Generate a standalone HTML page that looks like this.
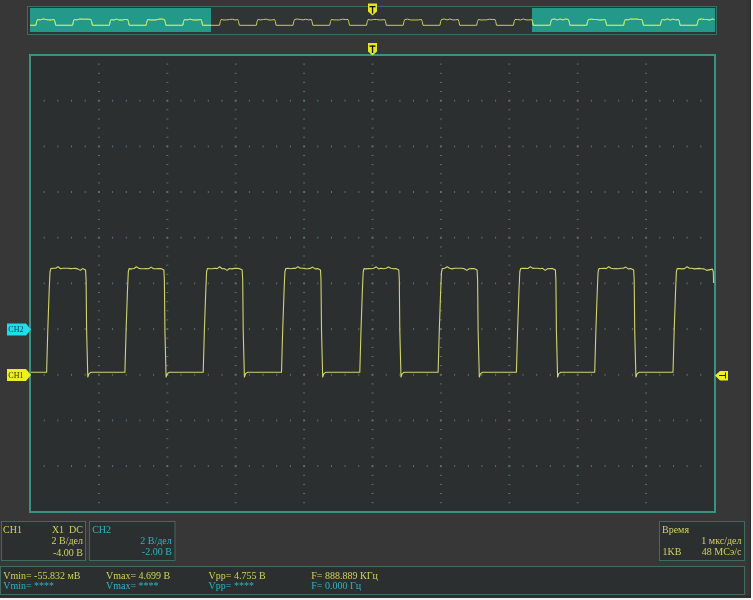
<!DOCTYPE html>
<html><head><meta charset="utf-8">
<style>
html,body{margin:0;padding:0;}
body{width:753px;height:600px;overflow:hidden;background:#373737;position:relative;}
svg{position:absolute;left:0;top:0;}
text{font-family:"Liberation Serif",serif;font-size:10px;}
</style></head><body>
<svg style="will-change:transform" width="753" height="600" viewBox="0 0 753 600">
<rect x="0" y="0" width="753" height="600" fill="#373737"/>
<!-- right/bottom white edge -->
<rect x="747" y="0" width="3" height="597" fill="#353535"/><rect x="750" y="0" width="1" height="600" fill="#2c2c2c"/>
<rect x="751" y="0" width="2" height="600" fill="#f2f2f2"/>
<rect x="0" y="595" width="750" height="3" fill="#2e2e2e"/>
<rect x="0" y="598" width="753" height="2" fill="#f2f2f2"/>

<!-- overview bar -->
<rect x="27.5" y="6.5" width="689" height="28" fill="#2f3434" stroke="#3f6b66" stroke-width="1"/>
<rect x="30" y="8" width="181" height="24" fill="#239a89"/>
<rect x="532" y="8" width="183" height="24" fill="#239a89"/>
<path d="M30 25.3 L35.9 25.3 L36.7 21.5 L37.5 19.5 L40.3 19.9 L43.1 19 L45.9 19.5 L48.6 19.9 L51.4 19.9 L54.2 19.5 L54.9 21.5 L55.7 25.3 L72.6 25.3 L73.4 21.5 L74.2 19.5 L77 19.9 L79.8 19 L82.6 19.2 L85.4 19.2 L88.1 19.2 L90.9 19.5 L91.6 21.5 L92.4 25.3 L109.4 25.3 L110.2 21.5 L111 19.5 L113.7 20 L116.5 19.2 L119.3 20 L122.1 20 L124.9 19.5 L127.7 19.5 L128.4 21.5 L129.2 25.3 L146.1 25.3 L146.9 21.5 L147.7 19.5 L150.5 20 L153.3 20 L156 19.9 L158.8 19.2 L161.6 19 L164.4 19.5 L165.1 21.5 L165.9 25.3 L182.8 25.3 L183.6 21.5 L184.4 19.5 L187.2 19.9 L190 19.2 L192.8 19.9 L195.6 20 L198.3 19.9 L201.1 19.5 L201.8 21.5 L202.6 25.3 L219.5 25.3 L220.3 21.5 L221.1 19.5 L223.9 20 L226.7 19.9 L229.5 19.5 L232.3 19.2 L235.1 20 L237.8 19.5 L238.5 21.5 L239.3 25.3 L256.3 25.3 L257.1 21.5 L257.9 19.5 L260.7 19.9 L263.4 19.5 L266.2 19.2 L269 20 L271.8 20 L274.6 19.5 L275.3 21.5 L276.1 25.3 L293 25.3 L293.8 21.5 L294.6 19.5 L297.4 19 L300.2 19.5 L303 19.9 L305.7 19.2 L308.5 19.9 L311.3 19.5 L312 21.5 L312.8 25.3 L329.7 25.3 L330.5 21.5 L331.3 19.5 L334.1 19.9 L336.9 20 L339.7 19.9 L342.5 19.2 L345.3 19.5 L348 19.5 L348.7 21.5 L349.5 25.3 L366.5 25.3 L367.3 21.5 L368.1 19.5 L370.9 20 L373.6 19.5 L376.4 19.5 L379.2 19.9 L382 19.9 L384.8 19.5 L385.5 21.5 L386.3 25.3 L403.2 25.3 L404 21.5 L404.8 19.5 L407.6 19.2 L410.4 19.9 L413.1 20 L415.9 20 L418.7 19.9 L421.5 19.5 L422.2 21.5 L423 25.3 L439.9 25.3 L440.7 21.5 L441.5 19.5 L444.3 19 L447.1 19.9 L449.9 19 L452.7 19.9 L455.4 19.9 L458.2 19.5 L458.9 21.5 L459.7 25.3 L476.7 25.3 L477.5 21.5 L478.3 19.5 L481 20 L483.8 19.9 L486.6 19.9 L489.4 19.2 L492.2 19.5 L495 19.5 L495.7 21.5 L496.5 25.3 L513.4 25.3 L514.2 21.5 L515 19.5 L517.8 19.5 L520.6 20 L523.3 19 L526.1 19.9 L528.9 20 L531.7 19.5 L532.4 21.5 L533.2 25.3 L550.1 25.3 L550.9 21.5 L551.7 19.5 L554.5 19 L557.3 19.9 L560.1 19 L562.9 19.9 L565.6 19 L568.4 19.5 L569.1 21.5 L569.9 25.3 L586.8 25.3 L587.6 21.5 L588.4 19.5 L591.2 19.2 L594 19.5 L596.8 19.5 L599.6 20 L602.4 19.9 L605.1 19.5 L605.8 21.5 L606.6 25.3 L623.6 25.3 L624.4 21.5 L625.2 19.5 L628 19.9 L630.7 19 L633.5 19.2 L636.3 19 L639.1 19.5 L641.9 19.5 L642.6 21.5 L643.4 25.3 L660.3 25.3 L661.1 21.5 L661.9 19.5 L664.7 19.9 L667.5 19 L670.3 20 L673 19.2 L675.8 19.9 L678.6 19.5 L679.3 21.5 L680.1 25.3 L697 25.3 L697.8 21.5 L698.6 19.5 L701.4 19 L704.2 19.5 L707 19.5 L709.8 20 L712.6 19 L714.5 19.5" fill="none" stroke="#cccc55" stroke-width="1" stroke-linejoin="round"/>
<clipPath id="c1"><rect x="30" y="8" width="181" height="24"/><rect x="532" y="8" width="183" height="24"/></clipPath>
<path d="M30 25.3 L35.9 25.3 L36.7 21.5 L37.5 19.5 L40.3 19.9 L43.1 19 L45.9 19.5 L48.6 19.9 L51.4 19.9 L54.2 19.5 L54.9 21.5 L55.7 25.3 L72.6 25.3 L73.4 21.5 L74.2 19.5 L77 19.9 L79.8 19 L82.6 19.2 L85.4 19.2 L88.1 19.2 L90.9 19.5 L91.6 21.5 L92.4 25.3 L109.4 25.3 L110.2 21.5 L111 19.5 L113.7 20 L116.5 19.2 L119.3 20 L122.1 20 L124.9 19.5 L127.7 19.5 L128.4 21.5 L129.2 25.3 L146.1 25.3 L146.9 21.5 L147.7 19.5 L150.5 20 L153.3 20 L156 19.9 L158.8 19.2 L161.6 19 L164.4 19.5 L165.1 21.5 L165.9 25.3 L182.8 25.3 L183.6 21.5 L184.4 19.5 L187.2 19.9 L190 19.2 L192.8 19.9 L195.6 20 L198.3 19.9 L201.1 19.5 L201.8 21.5 L202.6 25.3 L219.5 25.3 L220.3 21.5 L221.1 19.5 L223.9 20 L226.7 19.9 L229.5 19.5 L232.3 19.2 L235.1 20 L237.8 19.5 L238.5 21.5 L239.3 25.3 L256.3 25.3 L257.1 21.5 L257.9 19.5 L260.7 19.9 L263.4 19.5 L266.2 19.2 L269 20 L271.8 20 L274.6 19.5 L275.3 21.5 L276.1 25.3 L293 25.3 L293.8 21.5 L294.6 19.5 L297.4 19 L300.2 19.5 L303 19.9 L305.7 19.2 L308.5 19.9 L311.3 19.5 L312 21.5 L312.8 25.3 L329.7 25.3 L330.5 21.5 L331.3 19.5 L334.1 19.9 L336.9 20 L339.7 19.9 L342.5 19.2 L345.3 19.5 L348 19.5 L348.7 21.5 L349.5 25.3 L366.5 25.3 L367.3 21.5 L368.1 19.5 L370.9 20 L373.6 19.5 L376.4 19.5 L379.2 19.9 L382 19.9 L384.8 19.5 L385.5 21.5 L386.3 25.3 L403.2 25.3 L404 21.5 L404.8 19.5 L407.6 19.2 L410.4 19.9 L413.1 20 L415.9 20 L418.7 19.9 L421.5 19.5 L422.2 21.5 L423 25.3 L439.9 25.3 L440.7 21.5 L441.5 19.5 L444.3 19 L447.1 19.9 L449.9 19 L452.7 19.9 L455.4 19.9 L458.2 19.5 L458.9 21.5 L459.7 25.3 L476.7 25.3 L477.5 21.5 L478.3 19.5 L481 20 L483.8 19.9 L486.6 19.9 L489.4 19.2 L492.2 19.5 L495 19.5 L495.7 21.5 L496.5 25.3 L513.4 25.3 L514.2 21.5 L515 19.5 L517.8 19.5 L520.6 20 L523.3 19 L526.1 19.9 L528.9 20 L531.7 19.5 L532.4 21.5 L533.2 25.3 L550.1 25.3 L550.9 21.5 L551.7 19.5 L554.5 19 L557.3 19.9 L560.1 19 L562.9 19.9 L565.6 19 L568.4 19.5 L569.1 21.5 L569.9 25.3 L586.8 25.3 L587.6 21.5 L588.4 19.5 L591.2 19.2 L594 19.5 L596.8 19.5 L599.6 20 L602.4 19.9 L605.1 19.5 L605.8 21.5 L606.6 25.3 L623.6 25.3 L624.4 21.5 L625.2 19.5 L628 19.9 L630.7 19 L633.5 19.2 L636.3 19 L639.1 19.5 L641.9 19.5 L642.6 21.5 L643.4 25.3 L660.3 25.3 L661.1 21.5 L661.9 19.5 L664.7 19.9 L667.5 19 L670.3 20 L673 19.2 L675.8 19.9 L678.6 19.5 L679.3 21.5 L680.1 25.3 L697 25.3 L697.8 21.5 L698.6 19.5 L701.4 19 L704.2 19.5 L707 19.5 L709.8 20 L712.6 19 L714.5 19.5" fill="none" stroke="#a8f078" stroke-width="1" stroke-linejoin="round" clip-path="url(#c1)"/>

<!-- main graticule -->
<rect x="30" y="55" width="685" height="457" fill="#2b2f2f" stroke="#3a9282" stroke-width="2"/>
<g fill="#567270"><rect x="43.7" y="99.7" width="1" height="2"/><rect x="57.4" y="99.7" width="1" height="2"/><rect x="71" y="99.7" width="1" height="2"/><rect x="84.7" y="99.7" width="1" height="2"/><rect x="112.1" y="99.7" width="1" height="2"/><rect x="125.8" y="99.7" width="1" height="2"/><rect x="139.4" y="99.7" width="1" height="2"/><rect x="153.1" y="99.7" width="1" height="2"/><rect x="180.5" y="99.7" width="1" height="2"/><rect x="194.2" y="99.7" width="1" height="2"/><rect x="207.8" y="99.7" width="1" height="2"/><rect x="221.5" y="99.7" width="1" height="2"/><rect x="248.9" y="99.7" width="1" height="2"/><rect x="262.6" y="99.7" width="1" height="2"/><rect x="276.2" y="99.7" width="1" height="2"/><rect x="289.9" y="99.7" width="1" height="2"/><rect x="317.3" y="99.7" width="1" height="2"/><rect x="331" y="99.7" width="1" height="2"/><rect x="344.6" y="99.7" width="1" height="2"/><rect x="358.3" y="99.7" width="1" height="2"/><rect x="385.7" y="99.7" width="1" height="2"/><rect x="399.4" y="99.7" width="1" height="2"/><rect x="413" y="99.7" width="1" height="2"/><rect x="426.7" y="99.7" width="1" height="2"/><rect x="454.1" y="99.7" width="1" height="2"/><rect x="467.8" y="99.7" width="1" height="2"/><rect x="481.4" y="99.7" width="1" height="2"/><rect x="495.1" y="99.7" width="1" height="2"/><rect x="522.5" y="99.7" width="1" height="2"/><rect x="536.2" y="99.7" width="1" height="2"/><rect x="549.8" y="99.7" width="1" height="2"/><rect x="563.5" y="99.7" width="1" height="2"/><rect x="590.9" y="99.7" width="1" height="2"/><rect x="604.6" y="99.7" width="1" height="2"/><rect x="618.2" y="99.7" width="1" height="2"/><rect x="631.9" y="99.7" width="1" height="2"/><rect x="659.3" y="99.7" width="1" height="2"/><rect x="673" y="99.7" width="1" height="2"/><rect x="686.6" y="99.7" width="1" height="2"/><rect x="700.3" y="99.7" width="1" height="2"/><rect x="43.7" y="145.4" width="1" height="2"/><rect x="57.4" y="145.4" width="1" height="2"/><rect x="71" y="145.4" width="1" height="2"/><rect x="84.7" y="145.4" width="1" height="2"/><rect x="112.1" y="145.4" width="1" height="2"/><rect x="125.8" y="145.4" width="1" height="2"/><rect x="139.4" y="145.4" width="1" height="2"/><rect x="153.1" y="145.4" width="1" height="2"/><rect x="180.5" y="145.4" width="1" height="2"/><rect x="194.2" y="145.4" width="1" height="2"/><rect x="207.8" y="145.4" width="1" height="2"/><rect x="221.5" y="145.4" width="1" height="2"/><rect x="248.9" y="145.4" width="1" height="2"/><rect x="262.6" y="145.4" width="1" height="2"/><rect x="276.2" y="145.4" width="1" height="2"/><rect x="289.9" y="145.4" width="1" height="2"/><rect x="317.3" y="145.4" width="1" height="2"/><rect x="331" y="145.4" width="1" height="2"/><rect x="344.6" y="145.4" width="1" height="2"/><rect x="358.3" y="145.4" width="1" height="2"/><rect x="385.7" y="145.4" width="1" height="2"/><rect x="399.4" y="145.4" width="1" height="2"/><rect x="413" y="145.4" width="1" height="2"/><rect x="426.7" y="145.4" width="1" height="2"/><rect x="454.1" y="145.4" width="1" height="2"/><rect x="467.8" y="145.4" width="1" height="2"/><rect x="481.4" y="145.4" width="1" height="2"/><rect x="495.1" y="145.4" width="1" height="2"/><rect x="522.5" y="145.4" width="1" height="2"/><rect x="536.2" y="145.4" width="1" height="2"/><rect x="549.8" y="145.4" width="1" height="2"/><rect x="563.5" y="145.4" width="1" height="2"/><rect x="590.9" y="145.4" width="1" height="2"/><rect x="604.6" y="145.4" width="1" height="2"/><rect x="618.2" y="145.4" width="1" height="2"/><rect x="631.9" y="145.4" width="1" height="2"/><rect x="659.3" y="145.4" width="1" height="2"/><rect x="673" y="145.4" width="1" height="2"/><rect x="686.6" y="145.4" width="1" height="2"/><rect x="700.3" y="145.4" width="1" height="2"/><rect x="43.7" y="191" width="1" height="2"/><rect x="57.4" y="191" width="1" height="2"/><rect x="71" y="191" width="1" height="2"/><rect x="84.7" y="191" width="1" height="2"/><rect x="112.1" y="191" width="1" height="2"/><rect x="125.8" y="191" width="1" height="2"/><rect x="139.4" y="191" width="1" height="2"/><rect x="153.1" y="191" width="1" height="2"/><rect x="180.5" y="191" width="1" height="2"/><rect x="194.2" y="191" width="1" height="2"/><rect x="207.8" y="191" width="1" height="2"/><rect x="221.5" y="191" width="1" height="2"/><rect x="248.9" y="191" width="1" height="2"/><rect x="262.6" y="191" width="1" height="2"/><rect x="276.2" y="191" width="1" height="2"/><rect x="289.9" y="191" width="1" height="2"/><rect x="317.3" y="191" width="1" height="2"/><rect x="331" y="191" width="1" height="2"/><rect x="344.6" y="191" width="1" height="2"/><rect x="358.3" y="191" width="1" height="2"/><rect x="385.7" y="191" width="1" height="2"/><rect x="399.4" y="191" width="1" height="2"/><rect x="413" y="191" width="1" height="2"/><rect x="426.7" y="191" width="1" height="2"/><rect x="454.1" y="191" width="1" height="2"/><rect x="467.8" y="191" width="1" height="2"/><rect x="481.4" y="191" width="1" height="2"/><rect x="495.1" y="191" width="1" height="2"/><rect x="522.5" y="191" width="1" height="2"/><rect x="536.2" y="191" width="1" height="2"/><rect x="549.8" y="191" width="1" height="2"/><rect x="563.5" y="191" width="1" height="2"/><rect x="590.9" y="191" width="1" height="2"/><rect x="604.6" y="191" width="1" height="2"/><rect x="618.2" y="191" width="1" height="2"/><rect x="631.9" y="191" width="1" height="2"/><rect x="659.3" y="191" width="1" height="2"/><rect x="673" y="191" width="1" height="2"/><rect x="686.6" y="191" width="1" height="2"/><rect x="700.3" y="191" width="1" height="2"/><rect x="43.7" y="236.7" width="1" height="2"/><rect x="57.4" y="236.7" width="1" height="2"/><rect x="71" y="236.7" width="1" height="2"/><rect x="84.7" y="236.7" width="1" height="2"/><rect x="112.1" y="236.7" width="1" height="2"/><rect x="125.8" y="236.7" width="1" height="2"/><rect x="139.4" y="236.7" width="1" height="2"/><rect x="153.1" y="236.7" width="1" height="2"/><rect x="180.5" y="236.7" width="1" height="2"/><rect x="194.2" y="236.7" width="1" height="2"/><rect x="207.8" y="236.7" width="1" height="2"/><rect x="221.5" y="236.7" width="1" height="2"/><rect x="248.9" y="236.7" width="1" height="2"/><rect x="262.6" y="236.7" width="1" height="2"/><rect x="276.2" y="236.7" width="1" height="2"/><rect x="289.9" y="236.7" width="1" height="2"/><rect x="317.3" y="236.7" width="1" height="2"/><rect x="331" y="236.7" width="1" height="2"/><rect x="344.6" y="236.7" width="1" height="2"/><rect x="358.3" y="236.7" width="1" height="2"/><rect x="385.7" y="236.7" width="1" height="2"/><rect x="399.4" y="236.7" width="1" height="2"/><rect x="413" y="236.7" width="1" height="2"/><rect x="426.7" y="236.7" width="1" height="2"/><rect x="454.1" y="236.7" width="1" height="2"/><rect x="467.8" y="236.7" width="1" height="2"/><rect x="481.4" y="236.7" width="1" height="2"/><rect x="495.1" y="236.7" width="1" height="2"/><rect x="522.5" y="236.7" width="1" height="2"/><rect x="536.2" y="236.7" width="1" height="2"/><rect x="549.8" y="236.7" width="1" height="2"/><rect x="563.5" y="236.7" width="1" height="2"/><rect x="590.9" y="236.7" width="1" height="2"/><rect x="604.6" y="236.7" width="1" height="2"/><rect x="618.2" y="236.7" width="1" height="2"/><rect x="631.9" y="236.7" width="1" height="2"/><rect x="659.3" y="236.7" width="1" height="2"/><rect x="673" y="236.7" width="1" height="2"/><rect x="686.6" y="236.7" width="1" height="2"/><rect x="700.3" y="236.7" width="1" height="2"/><rect x="43.7" y="282.4" width="1" height="2"/><rect x="57.4" y="282.4" width="1" height="2"/><rect x="71" y="282.4" width="1" height="2"/><rect x="84.7" y="282.4" width="1" height="2"/><rect x="112.1" y="282.4" width="1" height="2"/><rect x="125.8" y="282.4" width="1" height="2"/><rect x="139.4" y="282.4" width="1" height="2"/><rect x="153.1" y="282.4" width="1" height="2"/><rect x="180.5" y="282.4" width="1" height="2"/><rect x="194.2" y="282.4" width="1" height="2"/><rect x="207.8" y="282.4" width="1" height="2"/><rect x="221.5" y="282.4" width="1" height="2"/><rect x="248.9" y="282.4" width="1" height="2"/><rect x="262.6" y="282.4" width="1" height="2"/><rect x="276.2" y="282.4" width="1" height="2"/><rect x="289.9" y="282.4" width="1" height="2"/><rect x="317.3" y="282.4" width="1" height="2"/><rect x="331" y="282.4" width="1" height="2"/><rect x="344.6" y="282.4" width="1" height="2"/><rect x="358.3" y="282.4" width="1" height="2"/><rect x="385.7" y="282.4" width="1" height="2"/><rect x="399.4" y="282.4" width="1" height="2"/><rect x="413" y="282.4" width="1" height="2"/><rect x="426.7" y="282.4" width="1" height="2"/><rect x="454.1" y="282.4" width="1" height="2"/><rect x="467.8" y="282.4" width="1" height="2"/><rect x="481.4" y="282.4" width="1" height="2"/><rect x="495.1" y="282.4" width="1" height="2"/><rect x="522.5" y="282.4" width="1" height="2"/><rect x="536.2" y="282.4" width="1" height="2"/><rect x="549.8" y="282.4" width="1" height="2"/><rect x="563.5" y="282.4" width="1" height="2"/><rect x="590.9" y="282.4" width="1" height="2"/><rect x="604.6" y="282.4" width="1" height="2"/><rect x="618.2" y="282.4" width="1" height="2"/><rect x="631.9" y="282.4" width="1" height="2"/><rect x="659.3" y="282.4" width="1" height="2"/><rect x="673" y="282.4" width="1" height="2"/><rect x="686.6" y="282.4" width="1" height="2"/><rect x="700.3" y="282.4" width="1" height="2"/><rect x="43.7" y="328.1" width="1" height="2"/><rect x="57.4" y="328.1" width="1" height="2"/><rect x="71" y="328.1" width="1" height="2"/><rect x="84.7" y="328.1" width="1" height="2"/><rect x="112.1" y="328.1" width="1" height="2"/><rect x="125.8" y="328.1" width="1" height="2"/><rect x="139.4" y="328.1" width="1" height="2"/><rect x="153.1" y="328.1" width="1" height="2"/><rect x="180.5" y="328.1" width="1" height="2"/><rect x="194.2" y="328.1" width="1" height="2"/><rect x="207.8" y="328.1" width="1" height="2"/><rect x="221.5" y="328.1" width="1" height="2"/><rect x="248.9" y="328.1" width="1" height="2"/><rect x="262.6" y="328.1" width="1" height="2"/><rect x="276.2" y="328.1" width="1" height="2"/><rect x="289.9" y="328.1" width="1" height="2"/><rect x="317.3" y="328.1" width="1" height="2"/><rect x="331" y="328.1" width="1" height="2"/><rect x="344.6" y="328.1" width="1" height="2"/><rect x="358.3" y="328.1" width="1" height="2"/><rect x="385.7" y="328.1" width="1" height="2"/><rect x="399.4" y="328.1" width="1" height="2"/><rect x="413" y="328.1" width="1" height="2"/><rect x="426.7" y="328.1" width="1" height="2"/><rect x="454.1" y="328.1" width="1" height="2"/><rect x="467.8" y="328.1" width="1" height="2"/><rect x="481.4" y="328.1" width="1" height="2"/><rect x="495.1" y="328.1" width="1" height="2"/><rect x="522.5" y="328.1" width="1" height="2"/><rect x="536.2" y="328.1" width="1" height="2"/><rect x="549.8" y="328.1" width="1" height="2"/><rect x="563.5" y="328.1" width="1" height="2"/><rect x="590.9" y="328.1" width="1" height="2"/><rect x="604.6" y="328.1" width="1" height="2"/><rect x="618.2" y="328.1" width="1" height="2"/><rect x="631.9" y="328.1" width="1" height="2"/><rect x="659.3" y="328.1" width="1" height="2"/><rect x="673" y="328.1" width="1" height="2"/><rect x="686.6" y="328.1" width="1" height="2"/><rect x="700.3" y="328.1" width="1" height="2"/><rect x="43.7" y="373.8" width="1" height="2"/><rect x="57.4" y="373.8" width="1" height="2"/><rect x="71" y="373.8" width="1" height="2"/><rect x="84.7" y="373.8" width="1" height="2"/><rect x="112.1" y="373.8" width="1" height="2"/><rect x="125.8" y="373.8" width="1" height="2"/><rect x="139.4" y="373.8" width="1" height="2"/><rect x="153.1" y="373.8" width="1" height="2"/><rect x="180.5" y="373.8" width="1" height="2"/><rect x="194.2" y="373.8" width="1" height="2"/><rect x="207.8" y="373.8" width="1" height="2"/><rect x="221.5" y="373.8" width="1" height="2"/><rect x="248.9" y="373.8" width="1" height="2"/><rect x="262.6" y="373.8" width="1" height="2"/><rect x="276.2" y="373.8" width="1" height="2"/><rect x="289.9" y="373.8" width="1" height="2"/><rect x="317.3" y="373.8" width="1" height="2"/><rect x="331" y="373.8" width="1" height="2"/><rect x="344.6" y="373.8" width="1" height="2"/><rect x="358.3" y="373.8" width="1" height="2"/><rect x="385.7" y="373.8" width="1" height="2"/><rect x="399.4" y="373.8" width="1" height="2"/><rect x="413" y="373.8" width="1" height="2"/><rect x="426.7" y="373.8" width="1" height="2"/><rect x="454.1" y="373.8" width="1" height="2"/><rect x="467.8" y="373.8" width="1" height="2"/><rect x="481.4" y="373.8" width="1" height="2"/><rect x="495.1" y="373.8" width="1" height="2"/><rect x="522.5" y="373.8" width="1" height="2"/><rect x="536.2" y="373.8" width="1" height="2"/><rect x="549.8" y="373.8" width="1" height="2"/><rect x="563.5" y="373.8" width="1" height="2"/><rect x="590.9" y="373.8" width="1" height="2"/><rect x="604.6" y="373.8" width="1" height="2"/><rect x="618.2" y="373.8" width="1" height="2"/><rect x="631.9" y="373.8" width="1" height="2"/><rect x="659.3" y="373.8" width="1" height="2"/><rect x="673" y="373.8" width="1" height="2"/><rect x="686.6" y="373.8" width="1" height="2"/><rect x="700.3" y="373.8" width="1" height="2"/><rect x="43.7" y="419.4" width="1" height="2"/><rect x="57.4" y="419.4" width="1" height="2"/><rect x="71" y="419.4" width="1" height="2"/><rect x="84.7" y="419.4" width="1" height="2"/><rect x="112.1" y="419.4" width="1" height="2"/><rect x="125.8" y="419.4" width="1" height="2"/><rect x="139.4" y="419.4" width="1" height="2"/><rect x="153.1" y="419.4" width="1" height="2"/><rect x="180.5" y="419.4" width="1" height="2"/><rect x="194.2" y="419.4" width="1" height="2"/><rect x="207.8" y="419.4" width="1" height="2"/><rect x="221.5" y="419.4" width="1" height="2"/><rect x="248.9" y="419.4" width="1" height="2"/><rect x="262.6" y="419.4" width="1" height="2"/><rect x="276.2" y="419.4" width="1" height="2"/><rect x="289.9" y="419.4" width="1" height="2"/><rect x="317.3" y="419.4" width="1" height="2"/><rect x="331" y="419.4" width="1" height="2"/><rect x="344.6" y="419.4" width="1" height="2"/><rect x="358.3" y="419.4" width="1" height="2"/><rect x="385.7" y="419.4" width="1" height="2"/><rect x="399.4" y="419.4" width="1" height="2"/><rect x="413" y="419.4" width="1" height="2"/><rect x="426.7" y="419.4" width="1" height="2"/><rect x="454.1" y="419.4" width="1" height="2"/><rect x="467.8" y="419.4" width="1" height="2"/><rect x="481.4" y="419.4" width="1" height="2"/><rect x="495.1" y="419.4" width="1" height="2"/><rect x="522.5" y="419.4" width="1" height="2"/><rect x="536.2" y="419.4" width="1" height="2"/><rect x="549.8" y="419.4" width="1" height="2"/><rect x="563.5" y="419.4" width="1" height="2"/><rect x="590.9" y="419.4" width="1" height="2"/><rect x="604.6" y="419.4" width="1" height="2"/><rect x="618.2" y="419.4" width="1" height="2"/><rect x="631.9" y="419.4" width="1" height="2"/><rect x="659.3" y="419.4" width="1" height="2"/><rect x="673" y="419.4" width="1" height="2"/><rect x="686.6" y="419.4" width="1" height="2"/><rect x="700.3" y="419.4" width="1" height="2"/><rect x="43.7" y="465.1" width="1" height="2"/><rect x="57.4" y="465.1" width="1" height="2"/><rect x="71" y="465.1" width="1" height="2"/><rect x="84.7" y="465.1" width="1" height="2"/><rect x="112.1" y="465.1" width="1" height="2"/><rect x="125.8" y="465.1" width="1" height="2"/><rect x="139.4" y="465.1" width="1" height="2"/><rect x="153.1" y="465.1" width="1" height="2"/><rect x="180.5" y="465.1" width="1" height="2"/><rect x="194.2" y="465.1" width="1" height="2"/><rect x="207.8" y="465.1" width="1" height="2"/><rect x="221.5" y="465.1" width="1" height="2"/><rect x="248.9" y="465.1" width="1" height="2"/><rect x="262.6" y="465.1" width="1" height="2"/><rect x="276.2" y="465.1" width="1" height="2"/><rect x="289.9" y="465.1" width="1" height="2"/><rect x="317.3" y="465.1" width="1" height="2"/><rect x="331" y="465.1" width="1" height="2"/><rect x="344.6" y="465.1" width="1" height="2"/><rect x="358.3" y="465.1" width="1" height="2"/><rect x="385.7" y="465.1" width="1" height="2"/><rect x="399.4" y="465.1" width="1" height="2"/><rect x="413" y="465.1" width="1" height="2"/><rect x="426.7" y="465.1" width="1" height="2"/><rect x="454.1" y="465.1" width="1" height="2"/><rect x="467.8" y="465.1" width="1" height="2"/><rect x="481.4" y="465.1" width="1" height="2"/><rect x="495.1" y="465.1" width="1" height="2"/><rect x="522.5" y="465.1" width="1" height="2"/><rect x="536.2" y="465.1" width="1" height="2"/><rect x="549.8" y="465.1" width="1" height="2"/><rect x="563.5" y="465.1" width="1" height="2"/><rect x="590.9" y="465.1" width="1" height="2"/><rect x="604.6" y="465.1" width="1" height="2"/><rect x="618.2" y="465.1" width="1" height="2"/><rect x="631.9" y="465.1" width="1" height="2"/><rect x="659.3" y="465.1" width="1" height="2"/><rect x="673" y="465.1" width="1" height="2"/><rect x="686.6" y="465.1" width="1" height="2"/><rect x="700.3" y="465.1" width="1" height="2"/><rect x="97.9" y="63.6" width="2" height="1"/><rect x="97.9" y="72.8" width="2" height="1"/><rect x="97.9" y="81.9" width="2" height="1"/><rect x="97.9" y="91" width="2" height="1"/><rect x="97.9" y="99.7" width="2" height="2"/><rect x="97.9" y="109.3" width="2" height="1"/><rect x="97.9" y="118.5" width="2" height="1"/><rect x="97.9" y="127.6" width="2" height="1"/><rect x="97.9" y="136.7" width="2" height="1"/><rect x="97.9" y="145.4" width="2" height="2"/><rect x="97.9" y="155" width="2" height="1"/><rect x="97.9" y="164.1" width="2" height="1"/><rect x="97.9" y="173.3" width="2" height="1"/><rect x="97.9" y="182.4" width="2" height="1"/><rect x="97.9" y="191" width="2" height="2"/><rect x="97.9" y="200.7" width="2" height="1"/><rect x="97.9" y="209.8" width="2" height="1"/><rect x="97.9" y="218.9" width="2" height="1"/><rect x="97.9" y="228.1" width="2" height="1"/><rect x="97.9" y="236.7" width="2" height="2"/><rect x="97.9" y="246.4" width="2" height="1"/><rect x="97.9" y="255.5" width="2" height="1"/><rect x="97.9" y="264.6" width="2" height="1"/><rect x="97.9" y="273.8" width="2" height="1"/><rect x="97.9" y="282.4" width="2" height="2"/><rect x="97.9" y="292" width="2" height="1"/><rect x="97.9" y="301.2" width="2" height="1"/><rect x="97.9" y="310.3" width="2" height="1"/><rect x="97.9" y="319.4" width="2" height="1"/><rect x="97.9" y="328.1" width="2" height="2"/><rect x="97.9" y="337.7" width="2" height="1"/><rect x="97.9" y="346.9" width="2" height="1"/><rect x="97.9" y="356" width="2" height="1"/><rect x="97.9" y="365.1" width="2" height="1"/><rect x="97.9" y="373.8" width="2" height="2"/><rect x="97.9" y="383.4" width="2" height="1"/><rect x="97.9" y="392.5" width="2" height="1"/><rect x="97.9" y="401.7" width="2" height="1"/><rect x="97.9" y="410.8" width="2" height="1"/><rect x="97.9" y="419.4" width="2" height="2"/><rect x="97.9" y="429.1" width="2" height="1"/><rect x="97.9" y="438.2" width="2" height="1"/><rect x="97.9" y="447.3" width="2" height="1"/><rect x="97.9" y="456.5" width="2" height="1"/><rect x="97.9" y="465.1" width="2" height="2"/><rect x="97.9" y="474.8" width="2" height="1"/><rect x="97.9" y="483.9" width="2" height="1"/><rect x="97.9" y="493" width="2" height="1"/><rect x="97.9" y="502.2" width="2" height="1"/><rect x="166.3" y="63.6" width="2" height="1"/><rect x="166.3" y="72.8" width="2" height="1"/><rect x="166.3" y="81.9" width="2" height="1"/><rect x="166.3" y="91" width="2" height="1"/><rect x="166.3" y="99.7" width="2" height="2"/><rect x="166.3" y="109.3" width="2" height="1"/><rect x="166.3" y="118.5" width="2" height="1"/><rect x="166.3" y="127.6" width="2" height="1"/><rect x="166.3" y="136.7" width="2" height="1"/><rect x="166.3" y="145.4" width="2" height="2"/><rect x="166.3" y="155" width="2" height="1"/><rect x="166.3" y="164.1" width="2" height="1"/><rect x="166.3" y="173.3" width="2" height="1"/><rect x="166.3" y="182.4" width="2" height="1"/><rect x="166.3" y="191" width="2" height="2"/><rect x="166.3" y="200.7" width="2" height="1"/><rect x="166.3" y="209.8" width="2" height="1"/><rect x="166.3" y="218.9" width="2" height="1"/><rect x="166.3" y="228.1" width="2" height="1"/><rect x="166.3" y="236.7" width="2" height="2"/><rect x="166.3" y="246.4" width="2" height="1"/><rect x="166.3" y="255.5" width="2" height="1"/><rect x="166.3" y="264.6" width="2" height="1"/><rect x="166.3" y="273.8" width="2" height="1"/><rect x="166.3" y="282.4" width="2" height="2"/><rect x="166.3" y="292" width="2" height="1"/><rect x="166.3" y="301.2" width="2" height="1"/><rect x="166.3" y="310.3" width="2" height="1"/><rect x="166.3" y="319.4" width="2" height="1"/><rect x="166.3" y="328.1" width="2" height="2"/><rect x="166.3" y="337.7" width="2" height="1"/><rect x="166.3" y="346.9" width="2" height="1"/><rect x="166.3" y="356" width="2" height="1"/><rect x="166.3" y="365.1" width="2" height="1"/><rect x="166.3" y="373.8" width="2" height="2"/><rect x="166.3" y="383.4" width="2" height="1"/><rect x="166.3" y="392.5" width="2" height="1"/><rect x="166.3" y="401.7" width="2" height="1"/><rect x="166.3" y="410.8" width="2" height="1"/><rect x="166.3" y="419.4" width="2" height="2"/><rect x="166.3" y="429.1" width="2" height="1"/><rect x="166.3" y="438.2" width="2" height="1"/><rect x="166.3" y="447.3" width="2" height="1"/><rect x="166.3" y="456.5" width="2" height="1"/><rect x="166.3" y="465.1" width="2" height="2"/><rect x="166.3" y="474.8" width="2" height="1"/><rect x="166.3" y="483.9" width="2" height="1"/><rect x="166.3" y="493" width="2" height="1"/><rect x="166.3" y="502.2" width="2" height="1"/><rect x="234.7" y="63.6" width="2" height="1"/><rect x="234.7" y="72.8" width="2" height="1"/><rect x="234.7" y="81.9" width="2" height="1"/><rect x="234.7" y="91" width="2" height="1"/><rect x="234.7" y="99.7" width="2" height="2"/><rect x="234.7" y="109.3" width="2" height="1"/><rect x="234.7" y="118.5" width="2" height="1"/><rect x="234.7" y="127.6" width="2" height="1"/><rect x="234.7" y="136.7" width="2" height="1"/><rect x="234.7" y="145.4" width="2" height="2"/><rect x="234.7" y="155" width="2" height="1"/><rect x="234.7" y="164.1" width="2" height="1"/><rect x="234.7" y="173.3" width="2" height="1"/><rect x="234.7" y="182.4" width="2" height="1"/><rect x="234.7" y="191" width="2" height="2"/><rect x="234.7" y="200.7" width="2" height="1"/><rect x="234.7" y="209.8" width="2" height="1"/><rect x="234.7" y="218.9" width="2" height="1"/><rect x="234.7" y="228.1" width="2" height="1"/><rect x="234.7" y="236.7" width="2" height="2"/><rect x="234.7" y="246.4" width="2" height="1"/><rect x="234.7" y="255.5" width="2" height="1"/><rect x="234.7" y="264.6" width="2" height="1"/><rect x="234.7" y="273.8" width="2" height="1"/><rect x="234.7" y="282.4" width="2" height="2"/><rect x="234.7" y="292" width="2" height="1"/><rect x="234.7" y="301.2" width="2" height="1"/><rect x="234.7" y="310.3" width="2" height="1"/><rect x="234.7" y="319.4" width="2" height="1"/><rect x="234.7" y="328.1" width="2" height="2"/><rect x="234.7" y="337.7" width="2" height="1"/><rect x="234.7" y="346.9" width="2" height="1"/><rect x="234.7" y="356" width="2" height="1"/><rect x="234.7" y="365.1" width="2" height="1"/><rect x="234.7" y="373.8" width="2" height="2"/><rect x="234.7" y="383.4" width="2" height="1"/><rect x="234.7" y="392.5" width="2" height="1"/><rect x="234.7" y="401.7" width="2" height="1"/><rect x="234.7" y="410.8" width="2" height="1"/><rect x="234.7" y="419.4" width="2" height="2"/><rect x="234.7" y="429.1" width="2" height="1"/><rect x="234.7" y="438.2" width="2" height="1"/><rect x="234.7" y="447.3" width="2" height="1"/><rect x="234.7" y="456.5" width="2" height="1"/><rect x="234.7" y="465.1" width="2" height="2"/><rect x="234.7" y="474.8" width="2" height="1"/><rect x="234.7" y="483.9" width="2" height="1"/><rect x="234.7" y="493" width="2" height="1"/><rect x="234.7" y="502.2" width="2" height="1"/><rect x="303.1" y="63.6" width="2" height="1"/><rect x="303.1" y="72.8" width="2" height="1"/><rect x="303.1" y="81.9" width="2" height="1"/><rect x="303.1" y="91" width="2" height="1"/><rect x="303.1" y="99.7" width="2" height="2"/><rect x="303.1" y="109.3" width="2" height="1"/><rect x="303.1" y="118.5" width="2" height="1"/><rect x="303.1" y="127.6" width="2" height="1"/><rect x="303.1" y="136.7" width="2" height="1"/><rect x="303.1" y="145.4" width="2" height="2"/><rect x="303.1" y="155" width="2" height="1"/><rect x="303.1" y="164.1" width="2" height="1"/><rect x="303.1" y="173.3" width="2" height="1"/><rect x="303.1" y="182.4" width="2" height="1"/><rect x="303.1" y="191" width="2" height="2"/><rect x="303.1" y="200.7" width="2" height="1"/><rect x="303.1" y="209.8" width="2" height="1"/><rect x="303.1" y="218.9" width="2" height="1"/><rect x="303.1" y="228.1" width="2" height="1"/><rect x="303.1" y="236.7" width="2" height="2"/><rect x="303.1" y="246.4" width="2" height="1"/><rect x="303.1" y="255.5" width="2" height="1"/><rect x="303.1" y="264.6" width="2" height="1"/><rect x="303.1" y="273.8" width="2" height="1"/><rect x="303.1" y="282.4" width="2" height="2"/><rect x="303.1" y="292" width="2" height="1"/><rect x="303.1" y="301.2" width="2" height="1"/><rect x="303.1" y="310.3" width="2" height="1"/><rect x="303.1" y="319.4" width="2" height="1"/><rect x="303.1" y="328.1" width="2" height="2"/><rect x="303.1" y="337.7" width="2" height="1"/><rect x="303.1" y="346.9" width="2" height="1"/><rect x="303.1" y="356" width="2" height="1"/><rect x="303.1" y="365.1" width="2" height="1"/><rect x="303.1" y="373.8" width="2" height="2"/><rect x="303.1" y="383.4" width="2" height="1"/><rect x="303.1" y="392.5" width="2" height="1"/><rect x="303.1" y="401.7" width="2" height="1"/><rect x="303.1" y="410.8" width="2" height="1"/><rect x="303.1" y="419.4" width="2" height="2"/><rect x="303.1" y="429.1" width="2" height="1"/><rect x="303.1" y="438.2" width="2" height="1"/><rect x="303.1" y="447.3" width="2" height="1"/><rect x="303.1" y="456.5" width="2" height="1"/><rect x="303.1" y="465.1" width="2" height="2"/><rect x="303.1" y="474.8" width="2" height="1"/><rect x="303.1" y="483.9" width="2" height="1"/><rect x="303.1" y="493" width="2" height="1"/><rect x="303.1" y="502.2" width="2" height="1"/><rect x="371.5" y="63.6" width="2" height="1"/><rect x="371.5" y="72.8" width="2" height="1"/><rect x="371.5" y="81.9" width="2" height="1"/><rect x="371.5" y="91" width="2" height="1"/><rect x="371.5" y="99.7" width="2" height="2"/><rect x="371.5" y="109.3" width="2" height="1"/><rect x="371.5" y="118.5" width="2" height="1"/><rect x="371.5" y="127.6" width="2" height="1"/><rect x="371.5" y="136.7" width="2" height="1"/><rect x="371.5" y="145.4" width="2" height="2"/><rect x="371.5" y="155" width="2" height="1"/><rect x="371.5" y="164.1" width="2" height="1"/><rect x="371.5" y="173.3" width="2" height="1"/><rect x="371.5" y="182.4" width="2" height="1"/><rect x="371.5" y="191" width="2" height="2"/><rect x="371.5" y="200.7" width="2" height="1"/><rect x="371.5" y="209.8" width="2" height="1"/><rect x="371.5" y="218.9" width="2" height="1"/><rect x="371.5" y="228.1" width="2" height="1"/><rect x="371.5" y="236.7" width="2" height="2"/><rect x="371.5" y="246.4" width="2" height="1"/><rect x="371.5" y="255.5" width="2" height="1"/><rect x="371.5" y="264.6" width="2" height="1"/><rect x="371.5" y="273.8" width="2" height="1"/><rect x="371.5" y="282.4" width="2" height="2"/><rect x="371.5" y="292" width="2" height="1"/><rect x="371.5" y="301.2" width="2" height="1"/><rect x="371.5" y="310.3" width="2" height="1"/><rect x="371.5" y="319.4" width="2" height="1"/><rect x="371.5" y="328.1" width="2" height="2"/><rect x="371.5" y="337.7" width="2" height="1"/><rect x="371.5" y="346.9" width="2" height="1"/><rect x="371.5" y="356" width="2" height="1"/><rect x="371.5" y="365.1" width="2" height="1"/><rect x="371.5" y="373.8" width="2" height="2"/><rect x="371.5" y="383.4" width="2" height="1"/><rect x="371.5" y="392.5" width="2" height="1"/><rect x="371.5" y="401.7" width="2" height="1"/><rect x="371.5" y="410.8" width="2" height="1"/><rect x="371.5" y="419.4" width="2" height="2"/><rect x="371.5" y="429.1" width="2" height="1"/><rect x="371.5" y="438.2" width="2" height="1"/><rect x="371.5" y="447.3" width="2" height="1"/><rect x="371.5" y="456.5" width="2" height="1"/><rect x="371.5" y="465.1" width="2" height="2"/><rect x="371.5" y="474.8" width="2" height="1"/><rect x="371.5" y="483.9" width="2" height="1"/><rect x="371.5" y="493" width="2" height="1"/><rect x="371.5" y="502.2" width="2" height="1"/><rect x="439.9" y="63.6" width="2" height="1"/><rect x="439.9" y="72.8" width="2" height="1"/><rect x="439.9" y="81.9" width="2" height="1"/><rect x="439.9" y="91" width="2" height="1"/><rect x="439.9" y="99.7" width="2" height="2"/><rect x="439.9" y="109.3" width="2" height="1"/><rect x="439.9" y="118.5" width="2" height="1"/><rect x="439.9" y="127.6" width="2" height="1"/><rect x="439.9" y="136.7" width="2" height="1"/><rect x="439.9" y="145.4" width="2" height="2"/><rect x="439.9" y="155" width="2" height="1"/><rect x="439.9" y="164.1" width="2" height="1"/><rect x="439.9" y="173.3" width="2" height="1"/><rect x="439.9" y="182.4" width="2" height="1"/><rect x="439.9" y="191" width="2" height="2"/><rect x="439.9" y="200.7" width="2" height="1"/><rect x="439.9" y="209.8" width="2" height="1"/><rect x="439.9" y="218.9" width="2" height="1"/><rect x="439.9" y="228.1" width="2" height="1"/><rect x="439.9" y="236.7" width="2" height="2"/><rect x="439.9" y="246.4" width="2" height="1"/><rect x="439.9" y="255.5" width="2" height="1"/><rect x="439.9" y="264.6" width="2" height="1"/><rect x="439.9" y="273.8" width="2" height="1"/><rect x="439.9" y="282.4" width="2" height="2"/><rect x="439.9" y="292" width="2" height="1"/><rect x="439.9" y="301.2" width="2" height="1"/><rect x="439.9" y="310.3" width="2" height="1"/><rect x="439.9" y="319.4" width="2" height="1"/><rect x="439.9" y="328.1" width="2" height="2"/><rect x="439.9" y="337.7" width="2" height="1"/><rect x="439.9" y="346.9" width="2" height="1"/><rect x="439.9" y="356" width="2" height="1"/><rect x="439.9" y="365.1" width="2" height="1"/><rect x="439.9" y="373.8" width="2" height="2"/><rect x="439.9" y="383.4" width="2" height="1"/><rect x="439.9" y="392.5" width="2" height="1"/><rect x="439.9" y="401.7" width="2" height="1"/><rect x="439.9" y="410.8" width="2" height="1"/><rect x="439.9" y="419.4" width="2" height="2"/><rect x="439.9" y="429.1" width="2" height="1"/><rect x="439.9" y="438.2" width="2" height="1"/><rect x="439.9" y="447.3" width="2" height="1"/><rect x="439.9" y="456.5" width="2" height="1"/><rect x="439.9" y="465.1" width="2" height="2"/><rect x="439.9" y="474.8" width="2" height="1"/><rect x="439.9" y="483.9" width="2" height="1"/><rect x="439.9" y="493" width="2" height="1"/><rect x="439.9" y="502.2" width="2" height="1"/><rect x="508.3" y="63.6" width="2" height="1"/><rect x="508.3" y="72.8" width="2" height="1"/><rect x="508.3" y="81.9" width="2" height="1"/><rect x="508.3" y="91" width="2" height="1"/><rect x="508.3" y="99.7" width="2" height="2"/><rect x="508.3" y="109.3" width="2" height="1"/><rect x="508.3" y="118.5" width="2" height="1"/><rect x="508.3" y="127.6" width="2" height="1"/><rect x="508.3" y="136.7" width="2" height="1"/><rect x="508.3" y="145.4" width="2" height="2"/><rect x="508.3" y="155" width="2" height="1"/><rect x="508.3" y="164.1" width="2" height="1"/><rect x="508.3" y="173.3" width="2" height="1"/><rect x="508.3" y="182.4" width="2" height="1"/><rect x="508.3" y="191" width="2" height="2"/><rect x="508.3" y="200.7" width="2" height="1"/><rect x="508.3" y="209.8" width="2" height="1"/><rect x="508.3" y="218.9" width="2" height="1"/><rect x="508.3" y="228.1" width="2" height="1"/><rect x="508.3" y="236.7" width="2" height="2"/><rect x="508.3" y="246.4" width="2" height="1"/><rect x="508.3" y="255.5" width="2" height="1"/><rect x="508.3" y="264.6" width="2" height="1"/><rect x="508.3" y="273.8" width="2" height="1"/><rect x="508.3" y="282.4" width="2" height="2"/><rect x="508.3" y="292" width="2" height="1"/><rect x="508.3" y="301.2" width="2" height="1"/><rect x="508.3" y="310.3" width="2" height="1"/><rect x="508.3" y="319.4" width="2" height="1"/><rect x="508.3" y="328.1" width="2" height="2"/><rect x="508.3" y="337.7" width="2" height="1"/><rect x="508.3" y="346.9" width="2" height="1"/><rect x="508.3" y="356" width="2" height="1"/><rect x="508.3" y="365.1" width="2" height="1"/><rect x="508.3" y="373.8" width="2" height="2"/><rect x="508.3" y="383.4" width="2" height="1"/><rect x="508.3" y="392.5" width="2" height="1"/><rect x="508.3" y="401.7" width="2" height="1"/><rect x="508.3" y="410.8" width="2" height="1"/><rect x="508.3" y="419.4" width="2" height="2"/><rect x="508.3" y="429.1" width="2" height="1"/><rect x="508.3" y="438.2" width="2" height="1"/><rect x="508.3" y="447.3" width="2" height="1"/><rect x="508.3" y="456.5" width="2" height="1"/><rect x="508.3" y="465.1" width="2" height="2"/><rect x="508.3" y="474.8" width="2" height="1"/><rect x="508.3" y="483.9" width="2" height="1"/><rect x="508.3" y="493" width="2" height="1"/><rect x="508.3" y="502.2" width="2" height="1"/><rect x="576.7" y="63.6" width="2" height="1"/><rect x="576.7" y="72.8" width="2" height="1"/><rect x="576.7" y="81.9" width="2" height="1"/><rect x="576.7" y="91" width="2" height="1"/><rect x="576.7" y="99.7" width="2" height="2"/><rect x="576.7" y="109.3" width="2" height="1"/><rect x="576.7" y="118.5" width="2" height="1"/><rect x="576.7" y="127.6" width="2" height="1"/><rect x="576.7" y="136.7" width="2" height="1"/><rect x="576.7" y="145.4" width="2" height="2"/><rect x="576.7" y="155" width="2" height="1"/><rect x="576.7" y="164.1" width="2" height="1"/><rect x="576.7" y="173.3" width="2" height="1"/><rect x="576.7" y="182.4" width="2" height="1"/><rect x="576.7" y="191" width="2" height="2"/><rect x="576.7" y="200.7" width="2" height="1"/><rect x="576.7" y="209.8" width="2" height="1"/><rect x="576.7" y="218.9" width="2" height="1"/><rect x="576.7" y="228.1" width="2" height="1"/><rect x="576.7" y="236.7" width="2" height="2"/><rect x="576.7" y="246.4" width="2" height="1"/><rect x="576.7" y="255.5" width="2" height="1"/><rect x="576.7" y="264.6" width="2" height="1"/><rect x="576.7" y="273.8" width="2" height="1"/><rect x="576.7" y="282.4" width="2" height="2"/><rect x="576.7" y="292" width="2" height="1"/><rect x="576.7" y="301.2" width="2" height="1"/><rect x="576.7" y="310.3" width="2" height="1"/><rect x="576.7" y="319.4" width="2" height="1"/><rect x="576.7" y="328.1" width="2" height="2"/><rect x="576.7" y="337.7" width="2" height="1"/><rect x="576.7" y="346.9" width="2" height="1"/><rect x="576.7" y="356" width="2" height="1"/><rect x="576.7" y="365.1" width="2" height="1"/><rect x="576.7" y="373.8" width="2" height="2"/><rect x="576.7" y="383.4" width="2" height="1"/><rect x="576.7" y="392.5" width="2" height="1"/><rect x="576.7" y="401.7" width="2" height="1"/><rect x="576.7" y="410.8" width="2" height="1"/><rect x="576.7" y="419.4" width="2" height="2"/><rect x="576.7" y="429.1" width="2" height="1"/><rect x="576.7" y="438.2" width="2" height="1"/><rect x="576.7" y="447.3" width="2" height="1"/><rect x="576.7" y="456.5" width="2" height="1"/><rect x="576.7" y="465.1" width="2" height="2"/><rect x="576.7" y="474.8" width="2" height="1"/><rect x="576.7" y="483.9" width="2" height="1"/><rect x="576.7" y="493" width="2" height="1"/><rect x="576.7" y="502.2" width="2" height="1"/><rect x="645.1" y="63.6" width="2" height="1"/><rect x="645.1" y="72.8" width="2" height="1"/><rect x="645.1" y="81.9" width="2" height="1"/><rect x="645.1" y="91" width="2" height="1"/><rect x="645.1" y="99.7" width="2" height="2"/><rect x="645.1" y="109.3" width="2" height="1"/><rect x="645.1" y="118.5" width="2" height="1"/><rect x="645.1" y="127.6" width="2" height="1"/><rect x="645.1" y="136.7" width="2" height="1"/><rect x="645.1" y="145.4" width="2" height="2"/><rect x="645.1" y="155" width="2" height="1"/><rect x="645.1" y="164.1" width="2" height="1"/><rect x="645.1" y="173.3" width="2" height="1"/><rect x="645.1" y="182.4" width="2" height="1"/><rect x="645.1" y="191" width="2" height="2"/><rect x="645.1" y="200.7" width="2" height="1"/><rect x="645.1" y="209.8" width="2" height="1"/><rect x="645.1" y="218.9" width="2" height="1"/><rect x="645.1" y="228.1" width="2" height="1"/><rect x="645.1" y="236.7" width="2" height="2"/><rect x="645.1" y="246.4" width="2" height="1"/><rect x="645.1" y="255.5" width="2" height="1"/><rect x="645.1" y="264.6" width="2" height="1"/><rect x="645.1" y="273.8" width="2" height="1"/><rect x="645.1" y="282.4" width="2" height="2"/><rect x="645.1" y="292" width="2" height="1"/><rect x="645.1" y="301.2" width="2" height="1"/><rect x="645.1" y="310.3" width="2" height="1"/><rect x="645.1" y="319.4" width="2" height="1"/><rect x="645.1" y="328.1" width="2" height="2"/><rect x="645.1" y="337.7" width="2" height="1"/><rect x="645.1" y="346.9" width="2" height="1"/><rect x="645.1" y="356" width="2" height="1"/><rect x="645.1" y="365.1" width="2" height="1"/><rect x="645.1" y="373.8" width="2" height="2"/><rect x="645.1" y="383.4" width="2" height="1"/><rect x="645.1" y="392.5" width="2" height="1"/><rect x="645.1" y="401.7" width="2" height="1"/><rect x="645.1" y="410.8" width="2" height="1"/><rect x="645.1" y="419.4" width="2" height="2"/><rect x="645.1" y="429.1" width="2" height="1"/><rect x="645.1" y="438.2" width="2" height="1"/><rect x="645.1" y="447.3" width="2" height="1"/><rect x="645.1" y="456.5" width="2" height="1"/><rect x="645.1" y="465.1" width="2" height="2"/><rect x="645.1" y="474.8" width="2" height="1"/><rect x="645.1" y="483.9" width="2" height="1"/><rect x="645.1" y="493" width="2" height="1"/><rect x="645.1" y="502.2" width="2" height="1"/></g>
<path d="M31 372.3 L46.6 372.3 L47.8 330 L49.2 290 L50 272 L50.8 268.6 L53.2 268.2 L55.7 268.3 L58.1 266.8 L60.6 268.7 L63 268.3 L65.5 268.3 L67.9 268.3 L70.4 268.6 L72.8 268.5 L75.3 268.4 L77.7 268.9 L80.2 270.4 L82.6 268.6 L85.6 270.1 L86.1 280 L86.6 330 L87.8 377 L89 373.6 L91.1 372.3 L124.9 372.3 L126.1 330 L127.5 290 L128.3 272 L129.1 268.6 L131.5 268.9 L134 268.5 L136.4 266.8 L138.9 268.4 L141.3 268.7 L143.8 268.7 L146.2 268.5 L148.7 268.8 L151.1 267.1 L153.6 268.7 L156 268.8 L158.5 268.5 L160.9 268.6 L163.9 270.1 L164.4 280 L164.9 330 L166.1 377 L167.3 373.6 L169.4 372.3 L203.2 372.3 L204.4 330 L205.8 290 L206.6 272 L207.4 268.6 L209.8 268.8 L212.3 268.8 L214.7 268.3 L217.2 268.6 L219.6 266.8 L222.1 268.8 L224.5 268.6 L227 270.4 L229.4 268.5 L231.9 268.9 L234.3 268.4 L236.8 268.3 L239.2 268.6 L242.2 270.1 L242.7 280 L243.2 330 L244.4 377 L245.6 373.6 L247.7 372.3 L281.5 372.3 L282.7 330 L284.1 290 L284.9 272 L285.7 268.6 L288.1 268.2 L290.6 268.8 L293 268.3 L295.5 268.4 L297.9 266.8 L300.4 268.2 L302.8 268.3 L305.3 268.6 L307.7 268.8 L310.2 268.4 L312.6 267.1 L315.1 268.9 L317.5 268.6 L320.5 270.1 L321 280 L321.5 330 L322.7 377 L323.9 373.6 L326 372.3 L359.8 372.3 L361 330 L362.4 290 L363.2 272 L364 268.6 L366.4 268.9 L368.9 268.5 L371.3 268.7 L373.8 268.3 L376.2 266.8 L378.7 268.9 L381.1 268.3 L383.6 268.7 L386 268.3 L388.5 267.1 L390.9 268.2 L393.4 268.7 L395.8 268.6 L398.8 270.1 L399.3 280 L399.8 330 L401 377 L402.2 373.6 L404.3 372.3 L438.1 372.3 L439.3 330 L440.7 290 L441.5 272 L442.3 268.6 L444.7 268.2 L447.2 266.8 L449.6 268.2 L452.1 268.9 L454.5 268.3 L457 268.3 L459.4 268.3 L461.9 268.2 L464.3 268.7 L466.8 270.4 L469.2 268.7 L471.7 268.5 L474.1 268.6 L477.1 270.1 L477.6 280 L478.1 330 L479.3 377 L480.5 373.6 L482.6 372.3 L516.4 372.3 L517.6 330 L519 290 L519.8 272 L520.6 268.6 L523 268.3 L525.5 268.4 L527.9 268.5 L530.4 266.8 L532.8 268.4 L535.3 268.3 L537.7 268.2 L540.2 268.8 L542.6 268.3 L545.1 270.4 L547.5 268.8 L550 268.6 L552.4 268.6 L555.4 270.1 L555.9 280 L556.4 330 L557.6 377 L558.8 373.6 L560.9 372.3 L594.7 372.3 L595.9 330 L597.3 290 L598.1 272 L598.9 268.6 L601.3 268.5 L603.8 268.3 L606.2 268.6 L608.7 266.8 L611.1 268.3 L613.6 268.8 L616 268.6 L618.5 268.7 L620.9 268.2 L623.4 268.3 L625.8 267.1 L628.3 268.9 L630.7 268.6 L633.7 270.1 L634.2 280 L634.7 330 L635.9 377 L637.1 373.6 L639.2 372.3 L673 372.3 L674.2 330 L675.6 290 L676.4 272 L677.2 268.6 L679.6 268.6 L682.1 268.9 L684.5 268.6 L687 266.8 L689.4 268.3 L691.9 268.3 L694.3 268.9 L696.8 268.6 L699.2 268.4 L701.7 268.7 L704.1 268.9 L706.6 270.4 L712.5 269.1 L713.3 272 L713.6 283" fill="none" stroke="#d2d470" stroke-width="1.1" stroke-linejoin="round"/>

<!-- trigger markers -->
<g fill="#e6e61e">
<path d="M368 3.5 H377 V11.5 L372.5 15.5 L368 11.5 Z"/>
<path d="M368 43 H377 V51.5 L372.5 55.5 L368 51.5 Z"/>
</g>
<g fill="#111" >
<rect x="369.5" y="6" width="6" height="1.3"/><rect x="371.9" y="6" width="1.3" height="7.5"/>
<rect x="369.5" y="45.5" width="6" height="1.3"/><rect x="371.9" y="45.5" width="1.3" height="7.5"/>
</g>

<!-- channel markers -->
<path d="M7 323.5 H26 L31 329.5 L26 335.5 H7 Z" fill="#22dcec"/>
<text x="8.3" y="332.2" fill="#0e3c50" style="font-size:8px">CH2</text>
<path d="M7 369 H26 L31 375 L26 381 H7 Z" fill="#eeee22"/>
<text x="8.3" y="378.2" fill="#30300a" style="font-size:8px">CH1</text>
<path d="M715 375.5 L720 371 H728 V380.5 H720 Z" fill="#eeee22"/>
<rect x="719" y="375" width="7" height="1" fill="#222"/><rect x="725" y="372.5" width="1" height="6" fill="#222"/>

<!-- bottom boxes -->
<g fill="#2b2f2f" stroke="#44695f" stroke-width="1">
<rect x="1.5" y="521.5" width="84" height="39"/>
<rect x="89.5" y="521.5" width="85.5" height="39"/>
<rect x="659.5" y="521.5" width="85" height="39"/>
<rect x="0.5" y="566.5" width="744" height="28"/>
</g>

<g fill="#d2d25a">
<text x="3" y="533">CH1</text>
<text x="83" y="533" text-anchor="end" xml:space="preserve">X1  DC</text>
<text x="83" y="544.3" text-anchor="end">2 В/дел</text>
<text x="83" y="555.6" text-anchor="end">-4.00 В</text>
<text x="662" y="532.8">Время</text>
<text x="741.5" y="544.4" text-anchor="end">1 мкс/дел</text>
<text x="662.5" y="555.4">1KB</text>
<text x="741.5" y="555.4" text-anchor="end">48 МСэ/с</text>
<text x="3.2" y="578.5">Vmin= -55.832 мВ</text>
<text x="106" y="578.5">Vmax= 4.699 В</text>
<text x="208.6" y="578.5">Vpp= 4.755 В</text>
<text x="311.3" y="578.5">F= 888.889 КГц</text>
</g>
<g fill="#2bb5c2">
<text x="92.2" y="533">CH2</text>
<text x="171.8" y="544" text-anchor="end">2 В/дел</text>
<text x="171.8" y="555" text-anchor="end">-2.00 В</text>
<text x="3.2" y="589.3">Vmin= ****</text>
<text x="106" y="589.3">Vmax= ****</text>
<text x="208.6" y="589.3">Vpp= ****</text>
<text x="311.3" y="589.3">F= 0.000 Гц</text>
</g>
</svg>
</body></html>
